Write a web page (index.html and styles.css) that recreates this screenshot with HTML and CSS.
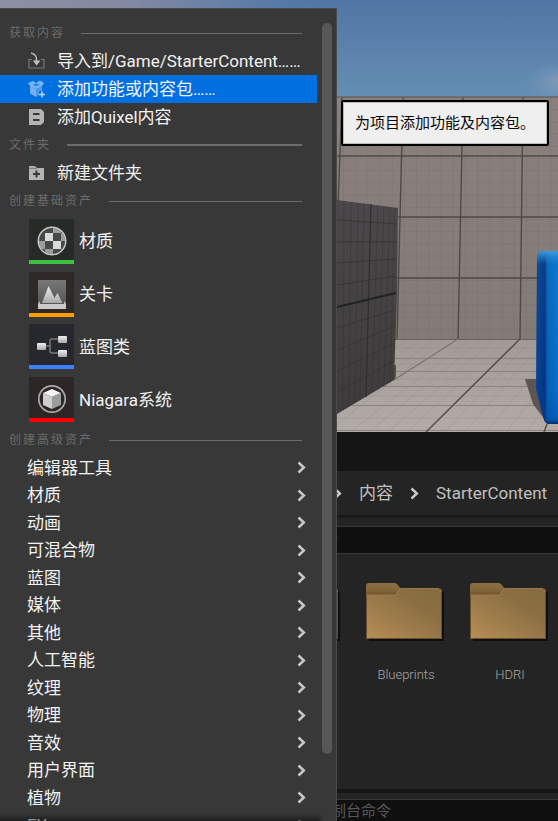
FILE: index.html
```html
<!DOCTYPE html>
<html lang="zh-CN">
<head>
<meta charset="utf-8">
<meta name="viewport" content="width=device-width, initial-scale=1">
<title>StarterContent</title>
<link rel="stylesheet" href="styles.css">
</head>
<body>
<svg class="defs" aria-hidden="true">
  <defs>
    <symbol id="chevron" viewBox="0 0 9 13"><path d="M1.500 1.500 6.800 6.500 1.500 11.500" fill="none" stroke="currentColor" stroke-width="2.500"/></symbol>
    <linearGradient id="folderFace" x1="0" y1="1" x2="1" y2="0">
      <stop offset="0" stop-color="#b78e56"/><stop offset=".65" stop-color="#8c7044"/><stop offset="1" stop-color="#846a3e"/>
    </linearGradient>
    <linearGradient id="folderTab" x1="0" y1="0" x2="0" y2="1">
      <stop offset="0" stop-color="#8c7044"/><stop offset=".6" stop-color="#806237"/><stop offset="1" stop-color="#5c4626"/>
    </linearGradient>
    <symbol id="folder" viewBox="0 0 80 60">
      <path d="M3 8h72q3 0 3 3v47H3z" fill="#0e0e0e"/>
      <path d="M0 3q0-3 3-3h25q2 0 3 1l5 6-4 7H0z" fill="url(#folderTab)"/>
      <path d="M0 12h28q2 0 3-2l2-3q1-1.500 3-1.500h37q3 0 3 3V56H0z" fill="url(#folderFace)"/>
      <path d="M.5 12v43.500h75V9" fill="none" stroke="#68502b"/>
      <path d="M0 12h28q2 0 3-2l2-3q1-1.500 3-1.500h37" fill="none" stroke="#a98350" stroke-width=".8"/>
    </symbol>
    <linearGradient id="silver" x1="0" y1="0" x2="0" y2="1">
      <stop offset="0" stop-color="#f0f0f0"/><stop offset="1" stop-color="#a8a8a8"/>
    </linearGradient>
  </defs>
</svg>

<main class="editor">
  <section class="viewport" aria-label="视口">
    <svg class="scene" viewBox="0 0 558 432" preserveAspectRatio="xMaxYMax slice" aria-hidden="true">
      <defs>
        <linearGradient id="sky" x1="0" y1="0" x2="0" y2="1"><stop offset="0" stop-color="#5076a5"/><stop offset="1" stop-color="#668fb4"/></linearGradient>
        <linearGradient id="haze" x1="0" y1="0" x2="1" y2="0"><stop offset="0" stop-color="#8e8fa2"/><stop offset=".22" stop-color="#8489a1"/><stop offset=".4" stop-color="#6680a5"/><stop offset=".6" stop-color="#5379a6" stop-opacity="0"/></linearGradient>
        <radialGradient id="cloud"><stop offset="0" stop-color="#8f9fb8" stop-opacity=".8"/><stop offset="1" stop-color="#7f9bbb" stop-opacity="0"/></radialGradient>
        <linearGradient id="wall" x1="0" y1="0" x2="0" y2="1"><stop offset="0" stop-color="#8a817e"/><stop offset="1" stop-color="#837b77"/></linearGradient>
        <linearGradient id="floor" x1="0" y1="0" x2="0" y2="1"><stop offset="0" stop-color="#a29a96"/><stop offset="1" stop-color="#b3aba7"/></linearGradient>
        <linearGradient id="block" x1="0" y1="0" x2="0" y2="1"><stop offset="0" stop-color="#4a484a"/><stop offset="1" stop-color="#3d3b3b"/></linearGradient>
        <linearGradient id="cubeSide" x1="0" y1="0" x2="1" y2="0"><stop offset="0" stop-color="#083f8e"/><stop offset=".4" stop-color="#042e72"/><stop offset=".52" stop-color="#0763b8"/><stop offset="1" stop-color="#0878cc"/></linearGradient>
        <linearGradient id="cubeLight" x1="0" y1="0" x2="0" y2="1"><stop offset="0" stop-color="#3c9be2"/><stop offset=".08" stop-color="#1a80d0" stop-opacity=".2"/><stop offset=".8" stop-color="#0050b0" stop-opacity=".2"/><stop offset=".97" stop-color="#0046a0" stop-opacity=".5"/><stop offset="1" stop-color="#022a66"/></linearGradient>
        <pattern id="fineGrid" x="343" y="97" width="12.200" height="12.200" patternUnits="userSpaceOnUse"><path d="M0 .5h12.200M.5 0v12.200" stroke="#6f6764" stroke-width="1" opacity=".3"/></pattern>
        <clipPath id="floorClip"><path d="M337 339h221v93H337z"/></clipPath>
      </defs>
      <path fill="url(#sky)" d="M0 0h558v98H0z"/>
      <path fill="url(#haze)" d="M0 0h558v9H0z"/>
      <ellipse cx="562" cy="82" rx="36" ry="20" fill="url(#cloud)"/>
      <path fill="url(#wall)" d="M0 97h558v243H0z"/>
      <path fill="url(#fineGrid)" d="M337 97h221v243H337z"/>
      <g fill="none" stroke="#4f4946" stroke-width="1.400">
        <path d="M337 156h221M337 217h221M337 278h221M342 97l-4 110M403 97l-6 243M463 97l-5 243M523 97l-3 243"/>
        <path d="M337 97h221" stroke="#686565"/>
      </g>
      <path fill="url(#floor)" d="M0 339h558v93H0z"/>
      <g clip-path="url(#floorClip)" fill="none">
        <path d="M394 339.500h164" stroke="#68615d"/>
        <g stroke="#746c68" stroke-width="1"><path d="M337 358.500h221M337 371.500h221M337 386.500h221M337 405.500h221M337 430.500h221" opacity=".6"/></g>
        <g stroke="#8c8480" stroke-width=".8" opacity=".35"><path d="M337 348h221M337 364h221M337 379h221M337 396h221M337 418h221M410 339l-50 32M422 339l-70 48M434 339l-97 75M446 339 337 424M470 339 350 432M482 339 369 432M495 339 388 432M508 339 407 432M532 339l-87 93M545 339l-80 93M558 345l-72 87M558 367l-52 65M558 390l-32 42"/></g>
        <path d="M458 339 394 380" stroke="#7c746f" stroke-width="1.200"/>
        <path d="M520 339 426 432M547 424l-3 8" stroke="#57504c" stroke-width="1.500"/>
      </g>
      <path fill="#555152" d="M394 365h2v12l-2 3z"/>
      <path fill="url(#block)" d="M337 200l61 8-1 85-3 87-57 34z"/>
      <g fill="none" stroke="#302e2e">
        <path d="M337 220l60 4M337 242h60M337 263l60-4M337 285l59-9M337 328l58-18M337 350l58-24M337 371l58-28M337 392l57-31" stroke-width=".8" opacity=".8"/>
        <path d="M344 201l-1 208M351 202l-2 204M358 203l-3 200M364 203l-4 196M378 205l-6 188M384 206l-6 184M390 207l-6 180M395 208l-5 175" stroke-width=".7" opacity=".5"/>
        <path d="M371 204l-5 193" stroke-width="1.200"/><path d="M337 307l59-14" stroke-width="1.800" stroke="#222"/>
      </g>
      <path fill="#5b5554" d="M525 379h11l12 45-15-20z"/>
      <path fill="url(#cubeSide)" d="M537 257q0-6 7-6h14v173h-9q-3 0-5-4l-8-31z"/>
      <path fill="url(#cubeLight)" d="M537 257q0-6 7-6h14v173h-9q-3 0-5-4l-8-31z"/>
    </svg>
  </section>

  <section class="browser" aria-label="内容浏览器">
    <nav class="crumbs" aria-label="路径">
      <svg class="chevron"><use href="#chevron"/></svg>
      <a href="#content">内容</a>
      <svg class="chevron"><use href="#chevron"/></svg>
      <a href="#starter">StarterContent</a>
    </nav>
    <div class="search"><input type="text" aria-label="搜索" placeholder="搜索"></div>
    <div class="folders">
      <div class="folder" aria-hidden="true"><svg><use href="#folder"/></svg></div>
      <div class="folder"><svg><use href="#folder"/></svg><span>Blueprints</span></div>
      <div class="folder"><svg><use href="#folder"/></svg><span>HDRI</span></div>
    </div>
    <div class="console"><input type="text" aria-label="控制台命令" placeholder="制台命令"></div>
  </section>
</main>

<aside class="menu">
  <div class="menu-body">
    <h2 class="heading">获取内容</h2>
    <div class="actions">
      <button class="item" type="button">
        <svg class="icon" viewBox="0 0 18 18"><path d="M4 7.500H1v8.500h15V7.500H13" fill="none" stroke="#777" stroke-width="1.200"/><path d="M3 1q5.500 1 5.500 7v2" fill="none" stroke="#b8b8b8" stroke-width="1.500"/><path d="M4.800 8.500h7.600l-3.800 5z" fill="#c0c0c0"/></svg>
        导入到/Game/StarterContent……</button>
      <button class="item selected" type="button">
        <svg class="icon" viewBox="0 0 18 18"><path d="M2 6l6 3v8l-6-3.500z" fill="#72afee"/><path d="M8 9l6-3v5h-3v4l-3 2z" fill="#4f98e8"/><path d="M0 3l5-2 3 2 4-2.500 4 2.500-2 3-6 3-6-3z" fill="#7ab6f0"/><path d="M4.500 4.500l3.500-1 4 1-4 2z" fill="#2a80df"/><path d="M14 11.500v6M11 14.500h6" stroke="#b6d9fa" stroke-width="1.600"/></svg>
        添加功能或内容包……</button>
      <button class="item" type="button">
        <svg class="icon" viewBox="0 0 18 18"><path d="M1 1h12l3 3v10l-3 3H1z" fill="#b4b4b4"/><path d="M5 6h6.500M5 12h6.500" stroke="#383838" stroke-width="2"/></svg>
        添加Quixel内容</button>
    </div>
    <h2 class="heading heavy">文件夹</h2>
    <button class="item" type="button">
      <svg class="icon" viewBox="0 0 18 18"><path d="M1 2h6l2 2h7v12H1z" fill="#b4b4b4"/><path d="M1 4.300h8" stroke="#777"/><path d="M8.500 6.500v7M5 10h7" stroke="#383838" stroke-width="2"/></svg>
      新建文件夹</button>
    <h2 class="heading">创建基础资产</h2>
    <div class="assets">
      <button class="asset" type="button">
        <span class="tile material"><svg viewBox="0 0 30 30"><defs><clipPath id="ball"><circle cx="15" cy="15" r="13"/></clipPath></defs><g clip-path="url(#ball)"><path fill="#454948" d="M0 0h30v30H0z"/><path fill="#9c9e9d" d="M16 0h8v7h-8zM8 7h8v8H8zM24 7h6v8h-6zM0 15h8v8H0zM8 23h8v7H8zM24 23h6v7h-6z"/><path fill="#dadada" d="M8 7h8v8H8zM16 15h8v8h-8z"/></g><circle cx="15" cy="15" r="13.700" fill="none" stroke="#c9caca" stroke-width="1.500"/></svg></span>材质</button>
      <button class="asset" type="button">
        <span class="tile level"><svg viewBox="0 0 30 30"><defs><linearGradient id="levelSky" x1="0" y1="0" x2="0" y2="1"><stop offset="0" stop-color="#777"/><stop offset="1" stop-color="#555"/></linearGradient></defs><path fill="url(#levelSky)" d="M1 1h28v25H1z"/><path fill="url(#silver)" d="M5 24 11.500 7l6 12 3-5 5 10z"/><path d="M1 25l2-3v3h24v-3l2 3v5H1z" fill="#c9c9c9"/></svg></span>关卡</button>
      <button class="asset" type="button">
        <span class="tile blueprint"><svg viewBox="0 0 30 30"><path d="M9 15h4M21 8h-6q-2 0-2 2v10q0 2 2 2h6" fill="none" stroke="#777" stroke-width="1.500"/><g fill="url(#silver)"><rect x="0" y="12" width="9" height="7" rx="1"/><rect x="21" y="5" width="9" height="7" rx="1"/><rect x="21" y="19" width="9" height="7" rx="1"/></g></svg></span>蓝图类</button>
      <button class="asset" type="button">
        <span class="tile niagara"><svg viewBox="0 0 30 30"><circle cx="15" cy="15" r="13.200" fill="none" stroke="#aaa" stroke-width="1.700"/><path d="M6 9l9-4 9 4-9 4z" fill="#f4f4f4"/><path d="M6 9l9 4v12l-9-4z" fill="#cecece"/><path d="M24 9l-9 4v12l9-4z" fill="#9c9c9c"/></svg></span>Niagara系统</button>
    </div>
    <h2 class="heading">创建高级资产</h2>
    <div class="submenus">
      <button class="sub" type="button">编辑器工具<svg class="chevron"><use href="#chevron"/></svg></button>
      <button class="sub" type="button">材质<svg class="chevron"><use href="#chevron"/></svg></button>
      <button class="sub" type="button">动画<svg class="chevron"><use href="#chevron"/></svg></button>
      <button class="sub" type="button">可混合物<svg class="chevron"><use href="#chevron"/></svg></button>
      <button class="sub" type="button">蓝图<svg class="chevron"><use href="#chevron"/></svg></button>
      <button class="sub" type="button">媒体<svg class="chevron"><use href="#chevron"/></svg></button>
      <button class="sub" type="button">其他<svg class="chevron"><use href="#chevron"/></svg></button>
      <button class="sub" type="button">人工智能<svg class="chevron"><use href="#chevron"/></svg></button>
      <button class="sub" type="button">纹理<svg class="chevron"><use href="#chevron"/></svg></button>
      <button class="sub" type="button">物理<svg class="chevron"><use href="#chevron"/></svg></button>
      <button class="sub" type="button">音效<svg class="chevron"><use href="#chevron"/></svg></button>
      <button class="sub" type="button">用户界面<svg class="chevron"><use href="#chevron"/></svg></button>
      <button class="sub" type="button">植物<svg class="chevron"><use href="#chevron"/></svg></button>
      <button class="sub" type="button">FX<svg class="chevron"><use href="#chevron"/></svg></button>
    </div>
  </div>
  <div class="scrollbar" aria-hidden="true"><div class="thumb"></div></div>
</aside>
<div class="tooltip" role="tooltip">为项目添加功能及内容包。</div>
</body>
</html>
```
FILE: styles.css
```css
* { box-sizing: border-box; }

body {
  margin: 0;
  height: 100vh;
  overflow: hidden;
  position: relative;
  background: #151515;
  color: #f2f2f2;
  font: 17px/24px Roboto, "Noto Sans CJK SC", sans-serif;
}

button, input {
  margin: 0;
  padding: 0;
  border: 0;
  background: none;
  color: inherit;
  font: inherit;
  text-align: left;
}

a { color: inherit; text-decoration: none; }

.defs { position: absolute; width: 0; height: 0; }

.chevron {
  width: 9px;
  height: 13px;
  flex: none;
  color: #c8c8c8;
}

/* Editor behind the menu */
.editor {
  height: 100%;
  display: flex;
  flex-direction: column;
}

.viewport { flex: 1; min-height: 0; }

.scene { display: block; width: 100%; height: 100%; }

.browser {
  background: #242424;
  border-top: 39px solid #151515;
}

.crumbs {
  height: 47px;
  padding-left: 333px;
  display: flex;
  align-items: center;
  gap: 17px;
  border-bottom: 3px solid #1a1a1a;
  color: #c0c0c0;
}

.search {
  margin-top: 8px;
  height: 28px;
  border: 1px solid #383838;
  border-width: 1px 0;
  background: #0f0f0f;
}

.search input, .console input {
  display: block;
  width: 100%;
  height: 26px;
  font-size: 15px;
}

.search input { padding-left: 308px; }
.console input { padding-left: 331px; }

input::placeholder { color: #575757; opacity: 1; }

.folders {
  height: 235px;
  padding: 29px 0 0 250px;
  display: flex;
  overflow: hidden;
}

.folder {
  flex: 0 0 104px;
  display: flex;
  flex-direction: column;
  align-items: center;
  gap: 20px;
  color: #a8a8a8;
  font-size: 13px;
  font-weight: 300;
}

.folder svg { width: 80px; height: 60px; }

.console {
  height: 32px;
  border-top: 4px solid #161616;
  padding-top: 6px;
}

.console input {
  height: 22px;
  border-top: 1px solid #383838;
  background: #0f0f0f;
}

/* Add menu */
.menu {
  position: absolute;
  top: 8px;
  bottom: 0;
  left: 0;
  width: 337px;
  display: flex;
  overflow: hidden;
  background: #383838;
  border-top: 1px solid #4a4a4a;
  border-right: 1px solid #4a4a4a;
}

.menu-body {
  flex: 1;
  padding-top: 10px;
  position: relative;
}

/* Shadow that marks more entries below */
.menu-body::after {
  content: "";
  position: absolute;
  left: 0;
  right: 0;
  bottom: -4px;
  height: 4px;
  background: #000;
  box-shadow: 0 0 4px 4px rgba(0, 0, 0, 0.45);
}

.scrollbar {
  width: 19px;
  padding: 14px 4px 67px 5px;
  flex: none;
}

.thumb {
  height: 100%;
  border-radius: 5px;
  background: #575757;
}

.heading {
  margin: 0;
  height: 28px;
  padding: 0 15px 0 9px;
  display: flex;
  align-items: center;
  gap: 16px;
  color: #6b6b6b;
  font-size: 12px;
  font-weight: 400;
  letter-spacing: 2px;
}

.heading::after {
  content: "";
  flex: 1;
  height: 1px;
  background: #6c6c6c;
}

.heading.heavy::after { height: 2px; }

.actions, .assets, .submenus {
  display: grid;
  grid-auto-rows: 1fr;
}

.actions { height: 84px; }
.assets { height: 211px; }
.submenus { height: 385px; }

.item, .asset, .sub {
  width: 100%;
  display: flex;
  align-items: center;
  white-space: nowrap;
}

.item { height: 28px; padding-left: 28px; gap: 11px; }

.selected { background: #0070e0; }

.icon { width: 18px; height: 18px; flex: none; }

.asset { padding-left: 29px; gap: 5px; }

.tile {
  width: 45px;
  height: 45px;
  padding-top: 3px;
  display: grid;
  place-items: center;
  border-bottom: 4px solid;
}

.tile svg { width: 30px; height: 30px; }

.material { background: #262b28; border-color: #40c040; }
.level { background: #2e2927; border-color: #ff9c00; }
.blueprint { background: #26282e; border-color: #3f7fff; }
.niagara { background: #2e2526; border-color: #ff0000; }

.sub {
  padding: 0 11px 0 27px;
  justify-content: space-between;
}

/* Hint beside the hovered entry */
.tooltip {
  position: absolute;
  top: 100px;
  left: 341px;
  padding: 9px 12px;
  border: 2px solid #000;
  border-radius: 2px;
  background: #efefef;
  box-shadow: inset 0 0 0 1px #bbb;
  color: #080808;
  font-size: 15px;
}
```
